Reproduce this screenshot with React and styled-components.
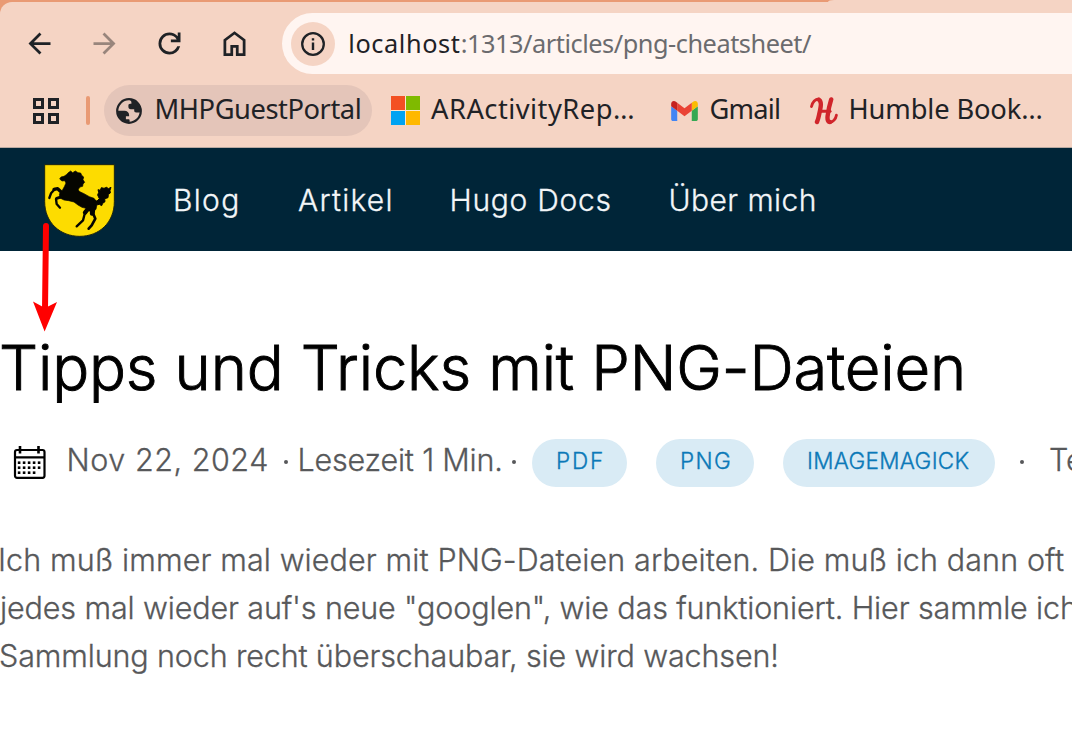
import React from 'react';
import styled, { createGlobalStyle } from 'styled-components';

const GlobalStyle = createGlobalStyle`
  * { box-sizing: border-box; }
  html, body { margin: 0; padding: 0; background: #fff; overflow: hidden; }
`;

const Page = styled.div`
  position: relative;
  width: 1072px;
  height: 729px;
  overflow: hidden;
  background: #fff;
  font-family: Inter, "Liberation Sans", sans-serif;
  font-weight: 300;
  white-space: nowrap;
`;

/* browser chrome */
const Chrome = styled.header`
  height: 148px;
  background: #e99a74;
  font-family: "Noto Sans", "Open Sans", sans-serif;
  font-weight: 400;
  color: #1f2226;
  overflow: hidden;
`;
const TabStrip = styled.div`
  height: 2px;
  display: flex;
  justify-content: flex-end;
`;
const ActiveTab = styled.div`
  width: 244px;
  height: 2px;
  background: #f5d4c4;
  border-top-left-radius: 6px 2px;
`;
const Toolbar = styled.div`
  height: 146px;
  background: #f5d4c4;
  border-top-left-radius: 12px;
  border-bottom: 1px solid #b9a9a1;
  display: flex;
  flex-direction: column;
`;
const NavRow = styled.div`
  display: flex;
  align-items: center;
  height: 61px;
  margin-top: 11px;
  padding-left: 22.5px;
`;
const ToolButton = styled.div`
  width: 33px;
  height: 33px;
  margin-right: 32.2px;
  color: ${(p) => (p.$disabled ? '#98857c' : '#1f2226')};
  svg { display: block; width: 33px; height: 33px; fill: currentColor; }
`;
const Omnibox = styled.div`
  flex: 1;
  height: 61px;
  margin-left: -1px;
  padding-left: 9px;
  display: flex;
  align-items: center;
  background: #fff5f1;
  border-radius: 31px 0 0 31px;
`;
const SiteInfo = styled.div`
  width: 44px;
  height: 44px;
  border-radius: 50%;
  background: #f5d4c4;
  display: grid;
  place-items: center;
  margin-right: 13px;
  svg { width: 26px; height: 26px; }
`;
const UrlHost = styled.span`
  font-size: 25.3px;
  letter-spacing: 0.6px;
  width: 112.5px;
  margin-top: -2px;
`;
const UrlPath = styled.span`
  font-size: 25.3px;
  letter-spacing: -0.46px;
  color: #6b6b6e;
  margin-top: -2px;
`;
const BookmarkRow = styled.div`
  display: flex;
  align-items: center;
  height: 51px;
  margin-top: 11px;
  padding-left: 33px;
`;
const Apps = styled.div`
  width: 26px;
  height: 26px;
  display: grid;
  grid-template-columns: 11px 11px;
  grid-template-rows: 11px 11px;
  gap: 4px 4px;
`;
const AppCell = styled.i`
  border: 3px solid #1f2226;
`;
const Divider = styled.div`
  width: 4px;
  height: 29px;
  border-radius: 2px;
  background: #e99a74;
  margin: 0 14px 0 27px;
`;
const Bookmark = styled.div`
  display: flex;
  align-items: center;
  height: 51px;
  width: ${(p) => p.$width}px;
  padding-left: ${(p) => p.$inset || 12}px;
  border-radius: 26px;
  background: ${(p) => (p.$active ? '#e4c5b9' : 'transparent')};
  svg { flex: none; display: block; }
`;
const BookmarkLabel = styled.span`
  font-size: 27.3px;
  line-height: 38px;
  letter-spacing: ${(p) => p.$tracking}px;
  margin-left: ${(p) => p.$gap}px;
  margin-top: -4px;
`;

/* site */
const SiteNav = styled.nav`
  height: 103px;
  background: #002538;
  display: flex;
  padding-left: 43.5px;
`;
const Crest = styled.div`
  width: 71px;
  margin-top: 15.5px;
  svg { display: block; }
`;
const NavLink = styled.a`
  color: #f3f6f8;
  font-size: 30px;
  line-height: 36px;
  margin-top: 34px;
  margin-left: ${(p) => p.$gap}px;
  width: ${(p) => p.$width}px;
  letter-spacing: ${(p) => p.$tracking}px;
  -webkit-text-stroke: 0.3px #f3f6f8;
`;
const Article = styled.main`
  color: #57585a;
`;
const Title = styled.h1`
  margin: 81px 0 0;
  font-size: 61.5px;
  line-height: 72px;
  font-weight: 300;
  letter-spacing: -0.16px;
  text-indent: -1px;
  color: #000;
  -webkit-text-stroke: 0.9px #000;
`;
const Meta = styled.div`
  display: flex;
  align-items: flex-start;
  height: 48px;
  margin-top: 35px;
  padding-left: 13px;
`;
const CalendarIcon = styled.svg`
  width: 33px;
  height: 34px;
  margin-top: 7px;
  flex: none;
`;
const MetaText = styled.span`
  flex: none;
  font-size: 30.5px;
  line-height: 36px;
  margin-top: 3px;
  margin-left: ${(p) => p.$gap}px;
  width: ${(p) => p.$width}px;
  letter-spacing: ${(p) => p.$tracking || 0}px;
  -webkit-text-stroke: 0.3px #57585a;
`;
const Dot = styled.i`
  flex: none;
  width: 4px;
  height: 4px;
  border-radius: 50%;
  background: #57585a;
  margin-top: 21px;
  margin-left: ${(p) => p.$gap}px;
`;
const Tag = styled.a`
  flex: none;
  height: 48px;
  width: ${(p) => p.$width}px;
  margin-left: ${(p) => p.$gap}px;
  padding-left: 24px;
  border-radius: 24px;
  background: #d9ebf5;
  color: #0b79b8;
  font-size: 22.5px;
  line-height: 43px;
  letter-spacing: ${(p) => p.$tracking}px;
  -webkit-text-stroke: 0.35px #0b79b8;
`;
const Body = styled.p`
  margin: 49px 0 0;
  font-size: 30.5px;
  line-height: 48px;
  -webkit-text-stroke: 0.3px #57585a;
`;
const Line = styled.span`
  display: block;
  letter-spacing: ${(p) => p.$tracking}px;
  margin-left: ${(p) => p.$shift || 0}px;
`;
const RedArrow = styled.svg`
  position: absolute;
  left: 30px;
  top: 220px;
  width: 30px;
  height: 114px;
`;

const MaterialIcon = ({ d }) => (
  <svg viewBox="0 0 24 24"><path d={d} /></svg>
);

const ARROW_BACK = 'M7.825 13l5.6 5.6L12 20l-8-8 8-8 1.425 1.4-5.6 5.6H20v2z';
const ARROW_FORWARD = 'M16.175 13H4v-2h12.175l-5.6-5.6L12 4l8 8-8 8-1.425-1.4z';
const RELOAD = 'M12 20q-3.35 0-5.675-2.325T4 12q0-3.35 2.325-5.675T12 4q1.725 0 3.3.713T18 6.75V4h2v7h-7V9h4.2q-.8-1.4-2.188-2.2T12 6Q9.5 6 7.75 7.75T6 12q0 2.5 1.75 4.25T12 18q1.925 0 3.475-1.1T17.65 14h2.1q-.7 2.65-2.85 4.325T12 20z';
const HOME = 'M6 19h3v-6h6v6h3v-9l-6-4.5L6 10zm-2 2V9l8-6 8 6v12h-7v-6h-2v6z';

const Globe = () => (
  <svg width="26" height="26" viewBox="0 0 26 26">
    <circle cx="13" cy="13" r="11.8" fill="none" stroke="#1f2226" strokeWidth="2.2" />
    <path fill="#1f2226" d="M13 1.5 15 1.6C21 2.8 24.8 7.4 24.8 13v1.6H20.2c-1.4 0-2-.8-2-2v-1.4h-3.4c-1.6 0-2.4-1-2.4-2.2V7.6c0-1 .6-1.8 1.8-1.8h1.2V4.2c0-1-.8-1.8-2.4-2.7Z" />
    <path fill="#1f2226" d="M1.3 12.8h7.2c2.6 0 4.6 1.8 4.6 4.2v1.2h-3.2v3h2.4c.9 0 1.3.4 1.3 1v2.4C6.4 25.2 1 20 1.3 12.8Z" />
  </svg>
);
const Microsoft = () => (
  <svg width="29" height="29" viewBox="0 0 29 29">
    <path fill="#fbe6cf" d="M0 0h29v29H0z" />
    <path fill="#f35022" d="M0 0h14v14H0z" />
    <path fill="#7fba00" d="M15 0h14v14H15z" />
    <path fill="#00a3f2" d="M0 15h14v14H0z" />
    <path fill="#ffb800" d="M15 15h14v14H15z" />
  </svg>
);
const GmailLogo = () => (
  <svg width="27" height="20" viewBox="52 42 88 66">
    <path fill="#4285f4" d="M58 108h14V74L52 59v43c0 3.32 2.69 6 6 6" />
    <path fill="#34a853" d="M120 108h14c3.32 0 6-2.69 6-6V59l-20 15" />
    <path fill="#fbbc04" d="M120 48v26l20-15v-8c0-7.42-8.47-11.65-14.4-7.2" />
    <path fill="#ea4335" d="M72 74V48l24 18 24-18v26L96 92" />
    <path fill="#c5221f" d="M52 51v8l20 15V48l-5.6-4.2c-5.94-4.45-14.4-.22-14.4 7.2" />
  </svg>
);
const HumbleLogo = () => (
  <svg width="28" height="28" viewBox="0 0 28 28" fill="none" stroke="#d0252b" strokeLinecap="round">
    <path strokeWidth="2.8" d="M1.5 9.6C2.4 5 5.6 2 8.4 2" />
    <path strokeWidth="4.4" d="M9.2 2.9C11.4 4.6 11.2 8 10.2 12.4 9.2 17 8.6 21.5 7 25" />
    <path strokeWidth="3" d="M10 14.2h10" />
    <path strokeWidth="4.4" d="M21.2 2.4C19.6 7.5 18.3 13.5 17.6 19c-.4 3.8.4 6 2.4 6" />
    <path strokeWidth="2.8" d="M19.8 25.4c3.2-.2 6-3.4 6.6-7.2" />
  </svg>
);

const CrestDrawing = () => (
  <svg width="71" height="74" viewBox="70 40 213 222">
    <path fill="#fddc00" stroke="#1d2410" strokeWidth="3" d="M72 42H281V153C281 216 235 257 177 257S72 216 72 153Z" />
    <g fill="#050500" stroke="#050500" strokeLinejoin="round" strokeLinecap="round">
      {/* head, mane and body */}
      <path strokeWidth="2" d="M143 66 150 61 156 66 164 61 172 66 180 67 183 74 189 79 187 87 192 95 187 100 186 107 178 109 173 116 175 122 190 129 206 138 220 143 227 152 228 166 226 176 214 182 204 181 196 173 184 170 172 163 160 154 144 150 130 148 118 142 116 130 125 119 131 108 136 97 132 90 124 91 117 85 121 79 130 77 137 72Z" />
      {/* forelegs */}
      <path fill="none" strokeWidth="10" d="M124 126 111 114 100 116" />
      <path fill="none" strokeWidth="7" d="M103 115 91 128 86 142" />
      <path fill="none" strokeWidth="9" d="M124 138 108 143" />
      <path fill="none" strokeWidth="7" d="M106 145 108 160 118 171" />
      {/* hind legs */}
      <path fill="none" strokeWidth="13" d="M204 172 193 186" />
      <path fill="none" strokeWidth="7" d="M192 190 187 209 168 227" />
      <path fill="none" strokeWidth="15" d="M217 170 215 188" />
      <path fill="none" strokeWidth="8" d="M219 192 224 204 213 224 204 234" />
      {/* tail */}
      <path fill="none" strokeWidth="7" d="M222 152 232 154" />
      <path strokeWidth="3" d="M230 150 236 144 231 133 234 125 232 117 239 119 242 111 250 113 258 110 263 114 271 110 268 119 269 127 263 131 262 141 252 144 253 153 246 158 243 165 236 161 228 163Z" />
    </g>
  </svg>
);

const calendarDots = [
  [6, 16], [11, 16], [16, 16], [21, 16], [26, 16],
  [6, 21], [11, 21], [16, 21], [21, 21], [26, 21],
  [6, 26], [11, 26], [16, 26], [21, 26],
];

export default function App() {
  return (
    <Page>
      <GlobalStyle />
      <Chrome>
        <TabStrip><ActiveTab /></TabStrip>
        <Toolbar>
          <NavRow>
            <ToolButton><MaterialIcon d={ARROW_BACK} /></ToolButton>
            <ToolButton $disabled><MaterialIcon d={ARROW_FORWARD} /></ToolButton>
            <ToolButton><MaterialIcon d={RELOAD} /></ToolButton>
            <ToolButton><MaterialIcon d={HOME} /></ToolButton>
            <Omnibox>
              <SiteInfo>
                <svg viewBox="0 0 26 26">
                  <circle cx="13" cy="13" r="10.8" fill="none" stroke="#1f2226" strokeWidth="2.3" />
                  <path fill="#1f2226" d="M11.8 7.2h2.4v2.4h-2.4zM11.8 11.6h2.4v7.4h-2.4z" />
                </svg>
              </SiteInfo>
              <UrlHost>localhost</UrlHost>
              <UrlPath>:1313/articles/png-cheatsheet/</UrlPath>
            </Omnibox>
          </NavRow>
          <BookmarkRow>
            <Apps><AppCell /><AppCell /><AppCell /><AppCell /></Apps>
            <Divider />
            <Bookmark $active $width={268}>
              <Globe />
              <BookmarkLabel $gap={12.5} $tracking={-0.45}>MHPGuestPortal</BookmarkLabel>
            </Bookmark>
            <Bookmark $width={287} $inset={19}>
              <Microsoft />
              <BookmarkLabel $gap={11} $tracking={0.48}>ARActivityRep…</BookmarkLabel>
            </Bookmark>
            <Bookmark $width={139}>
              <GmailLogo />
              <BookmarkLabel $gap={11.5} $tracking={-0.8}>Gmail</BookmarkLabel>
            </Bookmark>
            <Bookmark $width={260}>
              <HumbleLogo />
              <BookmarkLabel $gap={10.5} $tracking={-0.15}>Humble Book…</BookmarkLabel>
            </Bookmark>
          </BookmarkRow>
        </Toolbar>
      </Chrome>
      <SiteNav>
        <Crest><CrestDrawing /></Crest>
        <NavLink $gap={58.5} $width={125} $tracking={1.3}>Blog</NavLink>
        <NavLink $gap={0} $width={151.5} $tracking={1.25}>Artikel</NavLink>
        <NavLink $gap={0} $width={219} $tracking={0.7}>Hugo Docs</NavLink>
        <NavLink $gap={0} $width={160} $tracking={0.45}>Über mich</NavLink>
      </SiteNav>
      <Article>
        <Title>Tipps und Tricks mit PNG-Dateien</Title>
        <Meta>
          <CalendarIcon viewBox="0 0 33 34">
            <path fill="none" stroke="#000" strokeWidth="2.2" d="M4 4H29.5a2 2 0 0 1 2 2V29.8a2 2 0 0 1-2 2H4a2 2 0 0 1-2-2V6a2 2 0 0 1 2-2ZM2 11.4H31.5" />
            <path fill="none" stroke="#000" strokeWidth="2.6" d="M7 0V7.5M25.5 0V7.5" />
            {calendarDots.map(([x, y]) => (
              <rect key={`${x}-${y}`} x={x - 1.2} y={y - 0.6} width="2.6" height="2.6" />
            ))}
          </CalendarIcon>
          <MetaText $gap={20.5} $width={201} $tracking={0.55}>Nov 22, 2024</MetaText>
          <Dot $gap={16.5} />
          <MetaText $gap={9.5} $width={205} $tracking={-0.2}>Lesezeit 1 Min.</MetaText>
          <Dot $gap={9.5} />
          <Tag $gap={16} $width={95} $tracking={1.9}>PDF</Tag>
          <Tag $gap={29} $width={98} $tracking={1.4}>PNG</Tag>
          <Tag $gap={29} $width={212} $tracking={0.3}>IMAGEMAGICK</Tag>
          <Dot $gap={24.5} />
          <MetaText $gap={25.5} $width={60}>Tei</MetaText>
        </Meta>
        <Body>
          <Line $tracking={0.106} $shift={-2}>Ich muß immer mal wieder mit PNG-Dateien arbeiten. Die muß ich dann oft</Line>
          <Line $tracking={-0.13}>jedes mal wieder auf's neue "googlen", wie das funktioniert. Hier sammle ich</Line>
          <Line $tracking={-0.14} $shift={-1}>Sammlung noch recht überschaubar, sie wird wachsen!</Line>
        </Body>
      </Article>
      <RedArrow viewBox="0 0 30 114">
        <path d="M16 6 15 90" stroke="#f00" strokeWidth="6" strokeLinecap="round" />
        <path fill="#f00" d="M3 81.5 15 88 27 82 14.6 111.5Z" />
      </RedArrow>
    </Page>
  );
}
